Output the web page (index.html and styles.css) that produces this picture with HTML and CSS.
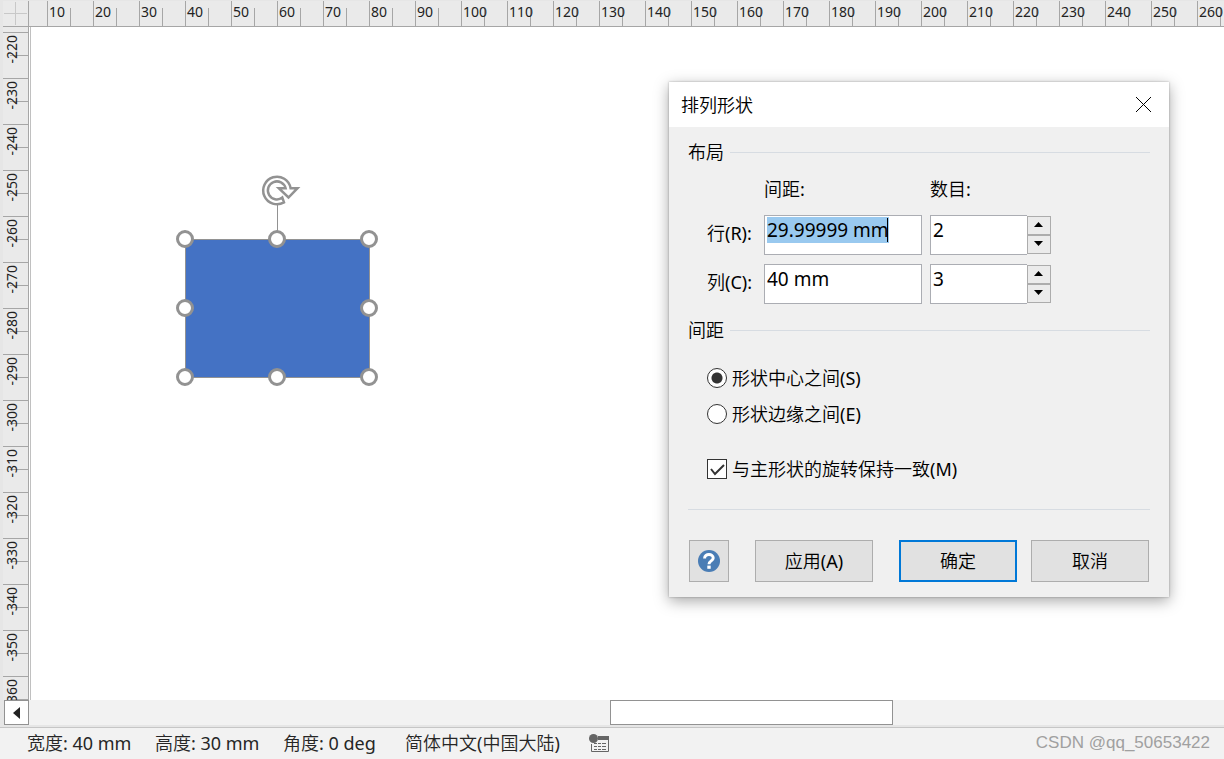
FILE: index.html
```
<!DOCTYPE html>
<html lang="zh-CN">
<head>
<meta charset="utf-8">
<title>排列形状</title>
<link rel="stylesheet" href="styles.css">
</head>
<body>
<div class="app">
  <div class="corner">
    <svg class="corner-mark" viewBox="0 0 25 25" aria-hidden="true"><path d="M12.500 1v23M1 12.500h23"/></svg>
  </div>
  <div class="ruler ruler-x" id="ruler-x"></div>
  <div class="ruler ruler-y" id="ruler-y"></div>
  <main class="page">
    <div class="canvas">
      <svg class="shape" viewBox="0 0 240 240" role="img" aria-label="矩形">
        <path class="stem" d="M117.500 44v36"/>
        <rect class="body" x="25.500" y="79.500" width="184" height="138"/>
        <g class="handles">
          <circle cx="25" cy="79" r="7.500"/><circle cx="117" cy="79" r="7.500"/><circle cx="209" cy="79" r="7.500"/>
          <circle cx="25" cy="148" r="7.500"/><circle cx="209" cy="148" r="7.500"/>
          <circle cx="25" cy="217" r="7.500"/><circle cx="117" cy="217" r="7.500"/><circle cx="209" cy="217" r="7.500"/>
        </g>
        <path class="rotate" d="M124 42.400A13.800 13.800 0 1 1 130.600 28.200H137.500L128.500 37.500L118.800 28.200H125.600A9 9 0 1 0 122.300 37.600Z"/>
      </svg>
    </div>
  </main>
  <div class="scroll">
    <button class="scroll-left" type="button" aria-label="向左滚动"><svg width="7" height="12" viewBox="0 0 7 12"><path d="M7 0v12L0 6z"/></svg></button>
    <div class="track"><div class="thumb"></div></div>
  </div>
  <footer class="status">
    <span class="size">宽度: 40 mm</span>
    <span class="size">高度: 30 mm</span>
    <span class="size">角度: 0 deg</span>
    <span class="locale">简体中文(中国大陆)</span>
    <button class="macro" type="button" aria-label="宏">
      <svg width="20" height="18" viewBox="0 0 20 18"><path fill="#666" d="M9 2h11v4H9z"/><path fill="none" stroke="#666" d="M2.500 10v7.500h17V5"/><circle cx="4.500" cy="4.500" r="4.500" fill="#666"/><path stroke="#666" d="M5 9.500h3m1 0h3m1 0h4M5 12.500h3m1 0h3m1 0h4M5 15.500h3m1 0h3m1 0h4"/></svg>
    </button>
    <span class="mark">CSDN @qq_50653422</span>
  </footer>

  <form class="dialog" role="dialog" aria-labelledby="dlg-title">
    <header class="title">
      <span id="dlg-title">排列形状</span>
      <button class="close" type="button" aria-label="关闭"><svg width="15" height="15" viewBox="0 0 15 15"><path d="M0 0l15 15M15 0L0 15"/></svg></button>
    </header>
    <div class="content">
      <h2 class="group">布局</h2>
      <div class="layout">
        <span class="gap-head">间距:</span>
        <span>数目:</span>
        <label for="row-gap">行(R):</label>
        <div class="field"><input id="row-gap" type="text" value="29.99999 mm"><i class="caret"></i></div>
        <div class="spin">
          <input type="text" value="2" aria-label="行数目">
          <div class="steps">
            <button type="button" aria-label="增加"><svg width="9" height="5" viewBox="0 0 9 5"><path d="M4.500 0L9 5H0z"/></svg></button>
            <button type="button" aria-label="减少"><svg width="9" height="5" viewBox="0 0 9 5"><path d="M0 0h9L4.500 5z"/></svg></button>
          </div>
        </div>
        <label for="col-gap">列(C):</label>
        <div class="field"><input id="col-gap" type="text" value="40 mm"></div>
        <div class="spin">
          <input type="text" value="3" aria-label="列数目">
          <div class="steps">
            <button type="button" aria-label="增加"><svg width="9" height="5" viewBox="0 0 9 5"><path d="M4.500 0L9 5H0z"/></svg></button>
            <button type="button" aria-label="减少"><svg width="9" height="5" viewBox="0 0 9 5"><path d="M0 0h9L4.500 5z"/></svg></button>
          </div>
        </div>
      </div>
      <h2 class="group">间距</h2>
      <div class="options">
        <label class="option"><input type="radio" name="between" checked>形状中心之间(S)</label>
        <label class="option"><input type="radio" name="between">形状边缘之间(E)</label>
        <label class="option match"><input type="checkbox" checked>与主形状的旋转保持一致(M)</label>
      </div>
      <div class="actions">
        <button class="btn help" type="button" aria-label="帮助">
          <svg width="22" height="22" viewBox="0 0 22 22"><circle cx="11" cy="11" r="11" fill="#4a7db5"/><path d="M6.600 8.400C6.600 3.300 15.200 3.300 15.200 8c0 3-4.200 2.800-4.200 6.200" fill="none" stroke="#fff" stroke-width="3"/><path fill="#fff" d="M9.300 15.600h3.400v3.200h-3.400z"/></svg>
        </button>
        <button class="btn apply" type="button">应用(A)</button>
        <button class="btn ok" type="submit">确定</button>
        <button class="btn" type="button">取消</button>
      </div>
    </div>
  </form>
</div>
<script src="app.js"></script>
</body>
</html>
```
FILE: styles.css
```
* { box-sizing: border-box; }

body {
  margin: 0;
  font-family: "Noto Sans", "Noto Sans CJK SC DemiLight", "Noto Sans CJK SC", sans-serif;
  font-size: 18px;
  font-weight: 400;
  line-height: 24px;
  color: #000;
}

button, input { font: inherit; color: inherit; margin: 0; padding: 0; border-radius: 0; }

.app {
  position: relative;
  display: grid;
  grid-template: 26px minmax(0, 1fr) 27px 32px / 26px minmax(0, 1fr);
  height: 100vh;
  padding: 1px 0 0 3px;
  background: #e6e6e6;
  overflow: hidden;
}

/* Rulers */
.corner { background: #eaeaea; border: solid #a6a6a6; border-width: 0 1px 1px 0; }
.corner-mark { display: block; width: 25px; height: 25px; stroke: #c8c8c8; }
.ruler { display: flex; background: #eaeaea; overflow: hidden; color: #222; font-size: 14px; line-height: 22px; }
.ruler-x { border-bottom: 1px solid #a6a6a6; padding-left: 18px; }
.ruler-y { flex-direction: column; border-right: 1px solid #a6a6a6; padding-top: 5px; }
.tick { flex: none; }
.ruler-x .tick {
  width: 46px;
  padding-left: 1px;
  border-left: 1px solid #a6a6a6;
  background: linear-gradient(#a6a6a6, #a6a6a6) 22px 7px / 1px 18px no-repeat;
}
.ruler-y .tick {
  height: 46px;
  padding-top: 2px;
  border-top: 1px solid #a6a6a6;
  background: linear-gradient(#a6a6a6, #a6a6a6) 7px 22px / 18px 1px no-repeat;
}
.ruler-y .num { display: block; width: 18px; line-height: 18px; writing-mode: vertical-rl; transform: rotate(180deg); }

/* Drawing page */
.page { padding-left: 1px; background: #fff; }
.canvas { position: relative; height: 100%; border-left: 1px solid #c0c0c0; overflow: hidden; }
.shape { position: absolute; left: 129px; top: 133px; width: 240px; height: 240px; }
.stem { stroke: #929292; }
.body { fill: #4472c4; stroke: #929292; }
.handles { fill: #fff; stroke: #929292; stroke-width: 3; }
.rotate { fill: #fff; stroke: #929292; stroke-width: 2.500; }

/* Scroll bar */
.scroll { grid-column: 1 / -1; display: flex; padding: 0 0 2px 1px; }
.scroll-left { width: 25px; background: #fff; border: 1px solid #929292; display: grid; place-items: center; fill: #222; }
.track { flex: 1; background: #f2f2f2; }
.thumb { width: 23.7%; height: 100%; margin-left: 48.6%; background: #fff; border: 1px solid #929292; }

/* Status bar */
.status {
  grid-column: 1 / -1;
  display: flex;
  align-items: center;
  gap: 22px;
  margin-left: -3px;
  padding: 0 14px 2px 27px;
  background: #f2f2f2;
  border-top: 1px solid #c6c6c6;
  color: #262626;
  white-space: nowrap;
}
.size { min-width: 106px; }
.locale { margin-left: -6px; }
.macro { display: flex; border: 0; background: none; margin-left: 7px; }
.mark { margin-left: auto; font-family: "Liberation Sans", sans-serif; font-size: 17px; color: #a0a0a0; }

/* Dialog */
.dialog {
  position: absolute;
  left: 669px;
  top: 82px;
  width: 500px;
  background: #f0f0f0;
  box-shadow: 0 0 2px rgba(0, 0, 0, .3), 0 4px 14px rgba(0, 0, 0, .35);
}
.title { display: flex; align-items: center; justify-content: space-between; height: 45px; padding: 0 18px 0 12px; background: #fff; }
.close { display: flex; border: 0; background: none; stroke: #000; }
.content { padding: 13px 19px 15px; }
.group { display: flex; align-items: center; gap: 6px; margin: 0; font-size: 18px; font-weight: inherit; }
.group::after { content: ""; flex: 1; height: 1px; background: #d7dce2; }

.layout { display: grid; grid-template: 29px 40px 40px / 49px 158px 121px; gap: 9px 8px; padding: 13px 0 14px 19px; }
.layout label { align-self: center; padding-bottom: 4px; white-space: nowrap; }
.gap-head { grid-column: 2; }
.field { position: relative; display: flex; }
.layout input { width: 100%; min-width: 0; height: 40px; padding: 0 2px 10px; border: 1px solid #abadb3; background: #fff; font-size: 19px; line-height: 24px; outline: none; }
.layout input::selection { background: #99c9ef; color: #000; }
.caret { position: absolute; left: 123px; top: 3px; width: 1px; height: 24px; background: #000; }
.spin { display: flex; }
.layout .spin input { flex: 1; border-right: 0; }
.steps { display: grid; width: 24px; margin: 1px 0; }
.steps button { display: grid; place-items: center; padding: 0 1px 2px 0; border: 1px solid #acacac; background: #ebebeb; }

.options { display: flex; flex-direction: column; gap: 12px; padding: 24px 0 28px 19px; border-bottom: 1px solid #d7dce2; }
.option { display: flex; align-items: center; gap: 5px; }
.option input { appearance: none; width: 20px; height: 20px; border: 1px solid #333; background: #fff; }
.option input[type="radio"] { border-radius: 50%; }
.option input[type="radio"]:checked { background: radial-gradient(circle, #333 5px, #fff 6px); }
.option input[type="checkbox"]:checked {
  background: #fff url("data:image/svg+xml,%3Csvg xmlns='http://www.w3.org/2000/svg' viewBox='0 0 18 18'%3E%3Cpath d='M3 9l4 5 9-9' fill='none' stroke='%23333' stroke-width='2'/%3E%3C/svg%3E");
}
.match { margin-top: 19px; }

.actions { display: flex; gap: 14px; padding: 30px 1px 0; }
.btn { width: 118px; height: 42px; display: grid; place-items: center; border: 1px solid #adadad; background: #e1e1e1; }
.help { width: 40px; }
.apply { margin: 0 12px; }
.ok { border: 2px solid #0078d7; }
```
FILE: app.js
```
function fillRuler(id, first, step, count) {
  const ruler = document.getElementById(id);
  for (let i = 0; i < count; i++) {
    const tick = document.createElement("div");
    const num = document.createElement("span");
    tick.className = "tick";
    num.className = "num";
    num.textContent = first + i * step;
    tick.append(num);
    ruler.append(tick);
  }
}
fillRuler("ruler-x", 10, 10, 26);
fillRuler("ruler-y", -220, -10, 15);

const rowGap = document.getElementById("row-gap");
rowGap.focus();
rowGap.select();
```
